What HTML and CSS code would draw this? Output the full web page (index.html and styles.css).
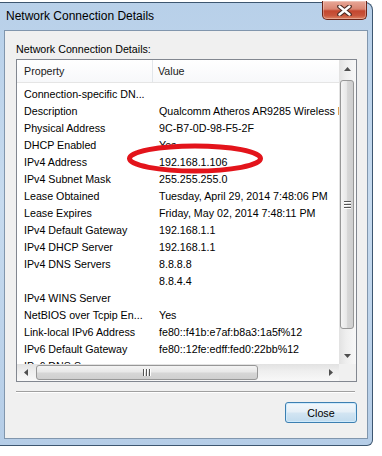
FILE: index.html
```html
<!DOCTYPE html>
<html lang="en">
<head>
  <meta charset="UTF-8">
  <title>Network Connection Details</title>
  <link rel="stylesheet" href="styles.css">
</head>
<body>
  <div class="window">
    <div class="titlebar">
      <span class="title">Network Connection Details</span>
      <div class="close-x">
        <svg width="15" height="11" viewBox="0 0 15 11">
          <path d="M2.5 1.5 L12.5 9.5 M12.5 1.5 L2.5 9.5" stroke="#4a2a22" stroke-width="4.6" stroke-linecap="round"/>
          <path d="M2.5 1.5 L12.5 9.5 M12.5 1.5 L2.5 9.5" stroke="#fff" stroke-width="2.4" stroke-linecap="round"/>
        </svg>
      </div>
    </div>

    <div class="client">
      <div class="caption">Network Connection Details:</div>

      <div class="listview">
        <div class="lv-view">
          <div class="lv-header">
            <div class="hcell">Property</div>
            <div class="hcell">Value</div>
          </div>
          <div class="lv-rows">
            <div class="row"><span>Connection-specific DN...</span><span></span></div>
            <div class="row"><span>Description</span><span>Qualcomm Atheros AR9285 Wireless Network Adapter</span></div>
            <div class="row"><span>Physical Address</span><span>9C-B7-0D-98-F5-2F</span></div>
            <div class="row"><span>DHCP Enabled</span><span>Yes</span></div>
            <div class="row"><span>IPv4 Address</span><span>192.168.1.106</span></div>
            <div class="row"><span>IPv4 Subnet Mask</span><span>255.255.255.0</span></div>
            <div class="row"><span>Lease Obtained</span><span>Tuesday, April 29, 2014 7:48:06 PM</span></div>
            <div class="row"><span>Lease Expires</span><span>Friday, May 02, 2014 7:48:11 PM</span></div>
            <div class="row"><span>IPv4 Default Gateway</span><span>192.168.1.1</span></div>
            <div class="row"><span>IPv4 DHCP Server</span><span>192.168.1.1</span></div>
            <div class="row"><span>IPv4 DNS Servers</span><span>8.8.8.8</span></div>
            <div class="row"><span></span><span>8.8.4.4</span></div>
            <div class="row"><span>IPv4 WINS Server</span><span></span></div>
            <div class="row"><span>NetBIOS over Tcpip En...</span><span>Yes</span></div>
            <div class="row"><span>Link-local IPv6 Address</span><span>fe80::f41b:e7af:b8a3:1a5f%12</span></div>
            <div class="row"><span>IPv6 Default Gateway</span><span>fe80::12fe:edff:fed0:22bb%12</span></div>
            <div class="row"><span>IPv6 DNS Server</span><span></span></div>
          </div>
          <!-- red marker drawn over the IPv4 address -->
          <svg class="marker" width="140" height="34" viewBox="0 0 140 34">
            <ellipse cx="70" cy="16.5" rx="65.5" ry="12.5" fill="none" stroke="#e3141b" stroke-width="5"/>
          </svg>
        </div>

        <div class="vscroll">
          <div class="sb-btn">
            <svg width="7" height="4" viewBox="0 0 7 4"><path d="M0 4 L3.5 0 L7 4 Z" fill="#4f4f4f"/></svg>
          </div>
          <div class="vthumb">
            <div class="grip-v"><i></i><i></i><i></i></div>
          </div>
          <div class="sb-btn sb-end">
            <svg width="7" height="4" viewBox="0 0 7 4"><path d="M0 0 L3.5 4 L7 0 Z" fill="#4f4f4f"/></svg>
          </div>
        </div>

        <div class="hscroll">
          <div class="sb-btn">
            <svg width="4" height="7" viewBox="0 0 4 7"><path d="M4 0 L0 3.5 L4 7 Z" fill="#4f4f4f"/></svg>
          </div>
          <div class="hthumb">
            <div class="grip-h"><i></i><i></i><i></i></div>
          </div>
          <div class="sb-btn sb-end">
            <svg width="4" height="7" viewBox="0 0 4 7"><path d="M0 0 L4 3.5 L0 7 Z" fill="#4f4f4f"/></svg>
          </div>
        </div>
        <div class="corner"></div>
      </div>

      <div class="separator"></div>

      <div class="actions">
        <button class="btn">Close</button>
      </div>
    </div>
  </div>
</body>
</html>
```

FILE: styles.css
```css
* {
  box-sizing: border-box;
}

body {
  margin: 0;
  padding-top: 2px;
  background-color: #fff;
  color: #000;
  font-family: "Liberation Sans", Arial, sans-serif;
  font-size: 10.7px;
}

/* Aero window frame */
.window {
  width: 373px;
  border: 1px solid #3d5670;
  border-left: none;
  border-radius: 0 8px 6px 0;
  padding: 0 4px 6px 4px;
  background: linear-gradient(180deg, #b8d0e9 0%, #c7dbef 45%, #b5cde7 100%);
}

.titlebar {
  display: flex;
  align-items: flex-start;
  height: 27px;
}

.title {
  margin: 6px 0 0 2px;
  font-size: 12px;
  line-height: 14px;
}

.close-x {
  display: flex;
  align-items: center;
  justify-content: center;
  width: 45px;
  height: 19px;
  margin: -2px 1px 0 auto;
  border: 1px solid #6b2418;
  border-top: none;
  border-radius: 0 0 5px 5px;
  background: linear-gradient(180deg, #e8a898 0%, #d98572 45%, #c4472f 55%, #c8553c 80%, #de8464 100%);
  box-shadow: inset 0 0 0 1px rgba(255, 255, 255, 0.3);
}

.client {
  height: 409px;
  border: 1px solid #8196ad;
  background-color: #f0f0f0;
  padding: 11px 10px 0 11px;
}

.caption {
  line-height: 14px;
}

/* List view */
.listview {
  display: grid;
  grid-template-columns: 1fr 17px;
  grid-template-rows: 1fr 17px;
  width: 341px;
  height: 323px;
  margin-top: 3px;
  border: 1px solid #828790;
  background-color: #fff;
}

.lv-view {
  position: relative;
  overflow: hidden;
}

.lv-header {
  display: grid;
  grid-template-columns: 136px 1fr;
  height: 23px;
  border-bottom: 1px solid #e5e5e5;
  background: linear-gradient(180deg, #fff 0%, #f7f8fa 100%);
}

.hcell {
  padding: 1px 0 0 7px;
  line-height: 21px;
  color: #1a1a1a;
}

.hcell:first-child {
  border-right: 1px solid #e2e6ea;
}

.hcell + .hcell {
  padding-left: 5px;
}

.lv-rows {
  padding-top: 3px;
}

.row {
  display: grid;
  grid-template-columns: 136px auto;
  height: 17px;
  line-height: 17px;
  white-space: nowrap;
}

.row span {
  padding-left: 7px;
  overflow: visible;
}

.row span + span {
  padding-left: 6px;
}

.marker {
  position: absolute;
  left: 108px;
  top: 82px;
}

/* Scroll bars */
.vscroll {
  display: flex;
  flex-direction: column;
  background: linear-gradient(90deg, #e2e2e2 0%, #eeeeee 40%, #f8f8f8 100%);
}

.hscroll {
  display: flex;
  background: linear-gradient(180deg, #e2e2e2 0%, #eeeeee 40%, #f8f8f8 100%);
}

.sb-btn {
  display: flex;
  align-items: center;
  justify-content: center;
  flex: 0 0 17px;
  height: 17px;
}

.sb-end {
  margin-top: auto;
}

.hscroll .sb-end {
  margin-top: 0;
  margin-left: auto;
}

.vthumb,
.hthumb {
  display: flex;
  align-items: center;
  justify-content: center;
  border: 1px solid #979797;
  border-radius: 3px;
}

.vthumb {
  height: 249px;
  margin: 3px 2px 0 1px;
  background: linear-gradient(90deg, #f4f4f4 0%, #e8e8e8 45%, #d6d6d6 55%, #cfcfcf 100%);
}

.hthumb {
  width: 222px;
  margin: 1px 0 1px 2px;
  background: linear-gradient(180deg, #f4f4f4 0%, #e8e8e8 45%, #d6d6d6 55%, #cfcfcf 100%);
}

.grip-v,
.grip-h {
  display: flex;
  gap: 1px;
}

.grip-v {
  flex-direction: column;
}

.grip-v i {
  display: block;
  width: 7px;
  height: 1px;
  background-color: #555;
  box-shadow: 0 1px 0 #fff;
  margin-bottom: 1px;
}

.grip-h i {
  display: block;
  width: 1px;
  height: 7px;
  background-color: #555;
  box-shadow: 1px 0 0 #fff;
  margin-right: 1px;
}

.corner {
  background-color: #f0f0f0;
}

.separator {
  width: 339px;
  height: 2px;
  margin-top: 9px;
  border-top: 1px solid #a0a0a0;
  border-bottom: 1px solid #fff;
}

.actions {
  display: flex;
  justify-content: flex-end;
  margin-top: 9px;
}

.btn {
  width: 72px;
  height: 21px;
  padding: 0;
  border: 1px solid #3c7fb1;
  border-radius: 3px;
  background: linear-gradient(180deg, #f2f7fb 0%, #e5eff7 48%, #d3e5f2 52%, #c1dbee 100%);
  box-shadow: inset 0 0 0 1px #cfeafc;
  color: #000;
  font-family: inherit;
  font-size: 10.7px;
}
```
